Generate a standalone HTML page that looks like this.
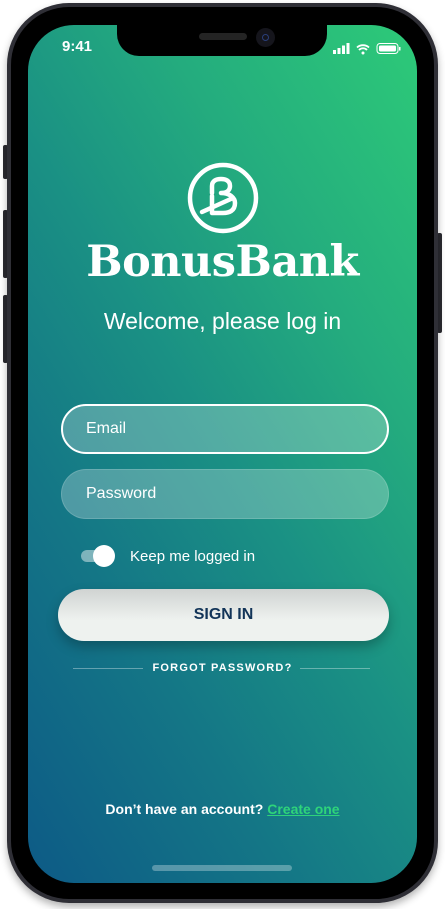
<!DOCTYPE html>
<html><head><meta charset="utf-8"><style>
*{margin:0;padding:0;box-sizing:border-box}
body{width:445px;height:909px;background:#fff;position:relative;overflow:hidden;font-family:"Liberation Sans",sans-serif}
.frame{position:absolute;left:7px;top:3px;width:431px;height:900px;border-radius:62px;background:#2f2f36;box-shadow:0 4px 8px rgba(0,0,0,.3)}
.btn{position:absolute;background:#2a2a30;width:5px;border-radius:2px}
.screen{position:absolute;left:28px;top:25px;width:389px;height:858px;border-radius:46px;overflow:hidden;background:linear-gradient(58deg,#0d5a86 0%,#147686 28%,#1a9084 50%,#24ac7e 72%,#2dca78 100%)}
.notch{position:absolute;left:89px;top:0;width:210px;height:31px;background:#000;border-radius:0 0 22px 22px}
.t{position:absolute;color:#fff;white-space:nowrap}
.field{position:absolute;left:33px;width:328px;height:50px;border-radius:25px;background:rgba(255,255,255,.25)}
</style></head><body>
<div class="btn" style="left:3px;top:145px;height:34px"></div>
<div class="btn" style="left:3px;top:210px;height:68px"></div>
<div class="btn" style="left:3px;top:295px;height:68px"></div>
<div class="btn" style="left:437px;top:233px;height:100px"></div>
<div class="frame"></div>
<div style="position:absolute;left:11px;top:7px;width:423px;height:892px;border-radius:58px;background:#000"></div>
<div class="screen">
 <div class="notch"><div style="position:absolute;left:82px;top:8px;width:48px;height:7px;border-radius:4px;background:#242424"></div><div style="position:absolute;left:139px;top:3px;width:19px;height:19px;border-radius:50%;background:#15151c"></div><div style="position:absolute;left:145px;top:9px;width:7px;height:7px;border-radius:50%;border:1.5px solid #2a3f7a"></div></div>
 <div class="t" style="left:34px;top:13px;font-weight:bold;font-size:15px">9:41</div>
 <svg style="position:absolute;left:305px;top:17px" width="70" height="14" viewBox="0 0 70 14">
  <rect x="0" y="8" width="3" height="4" fill="#fff"/><rect x="4.5" y="6" width="3" height="6" fill="#fff"/><rect x="9" y="3.5" width="3" height="8.5" fill="#fff"/><rect x="13.5" y="1" width="3" height="11" fill="#fff"/>
  <path d="M24 5.5a9 9 0 0 1 12 0M26 8a5.5 5.5 0 0 1 8 0" stroke="#fff" stroke-width="1.8" fill="none"/><circle cx="30" cy="11" r="1.5" fill="#fff"/>
  <rect x="44" y="1.5" width="21" height="10" rx="3" fill="none" stroke="#fff" stroke-width="1"/><rect x="46" y="3.5" width="17" height="6" rx="1.5" fill="#fff"/><rect x="66" y="5" width="1.5" height="3.5" fill="#fff"/>
 </svg>
 <svg style="position:absolute;left:157px;top:135px" width="76" height="76" viewBox="0 0 76 76" fill="none" stroke="#fff" stroke-width="4.5" stroke-linecap="round" stroke-linejoin="round">
  <circle cx="38" cy="38" r="33"/>
  <path d="M27 33V26c0-5 4-7 9-7s9 2 9 7c0 4-3 7-9 7c9 0 14 5 14 10c0 8-6 10-12 10H27V36"/>
  <path d="M17 52L48 38"/>
 </svg>
 <div class="t" style="left:0;width:389px;text-align:center;top:212px;font-family:'DejaVu Serif','Liberation Serif',serif;font-weight:bold;font-size:43px;letter-spacing:-0.5px">BonusBank</div>
 <div class="t" style="left:0;width:389px;text-align:center;top:283px;font-size:23px">Welcome, please log in</div>
 <div class="field" style="top:379px;border:2px solid #fff"></div>
 <div class="t" style="left:58px;top:395px;font-size:16px">Email</div>
 <div class="field" style="top:444px;border:1px solid rgba(255,255,255,.15)"></div>
 <div class="t" style="left:58px;top:460px;font-size:16px">Password</div>
 <div style="position:absolute;left:53px;top:525px;width:30px;height:12px;border-radius:6px;background:rgba(255,255,255,.45)"></div>
 <div style="position:absolute;left:65px;top:520px;width:22px;height:22px;border-radius:50%;background:#fff"></div>
 <div class="t" style="left:102px;top:523px;font-size:15px">Keep me logged in</div>
 <div style="position:absolute;left:30px;top:564px;width:331px;height:52px;border-radius:26px;background:linear-gradient(#d0d3d2,#eef2ef 60%);box-shadow:0 6px 12px rgba(0,0,0,.25)"></div>
 <div class="t" style="left:30px;width:331px;text-align:center;top:581px;font-size:16px;font-weight:bold;color:#123458">SIGN IN</div>
 <div style="position:absolute;left:45px;top:643px;width:70px;height:1px;background:rgba(255,255,255,.35)"></div>
 <div style="position:absolute;left:272px;top:643px;width:70px;height:1px;background:rgba(255,255,255,.35)"></div>
 <div class="t" style="left:0;width:389px;text-align:center;top:637px;font-size:11px;font-weight:bold;letter-spacing:1.2px">FORGOT PASSWORD?</div>
 <div class="t" style="left:0;width:389px;text-align:center;top:776px;font-size:14px;font-weight:bold">Don’t have an account? <span style="color:#2ed47a;text-decoration:underline">Create one</span></div>
 <div style="position:absolute;left:124px;top:840px;width:140px;height:6px;border-radius:3px;background:rgba(255,255,255,.3)"></div>
</div>
</body></html>
